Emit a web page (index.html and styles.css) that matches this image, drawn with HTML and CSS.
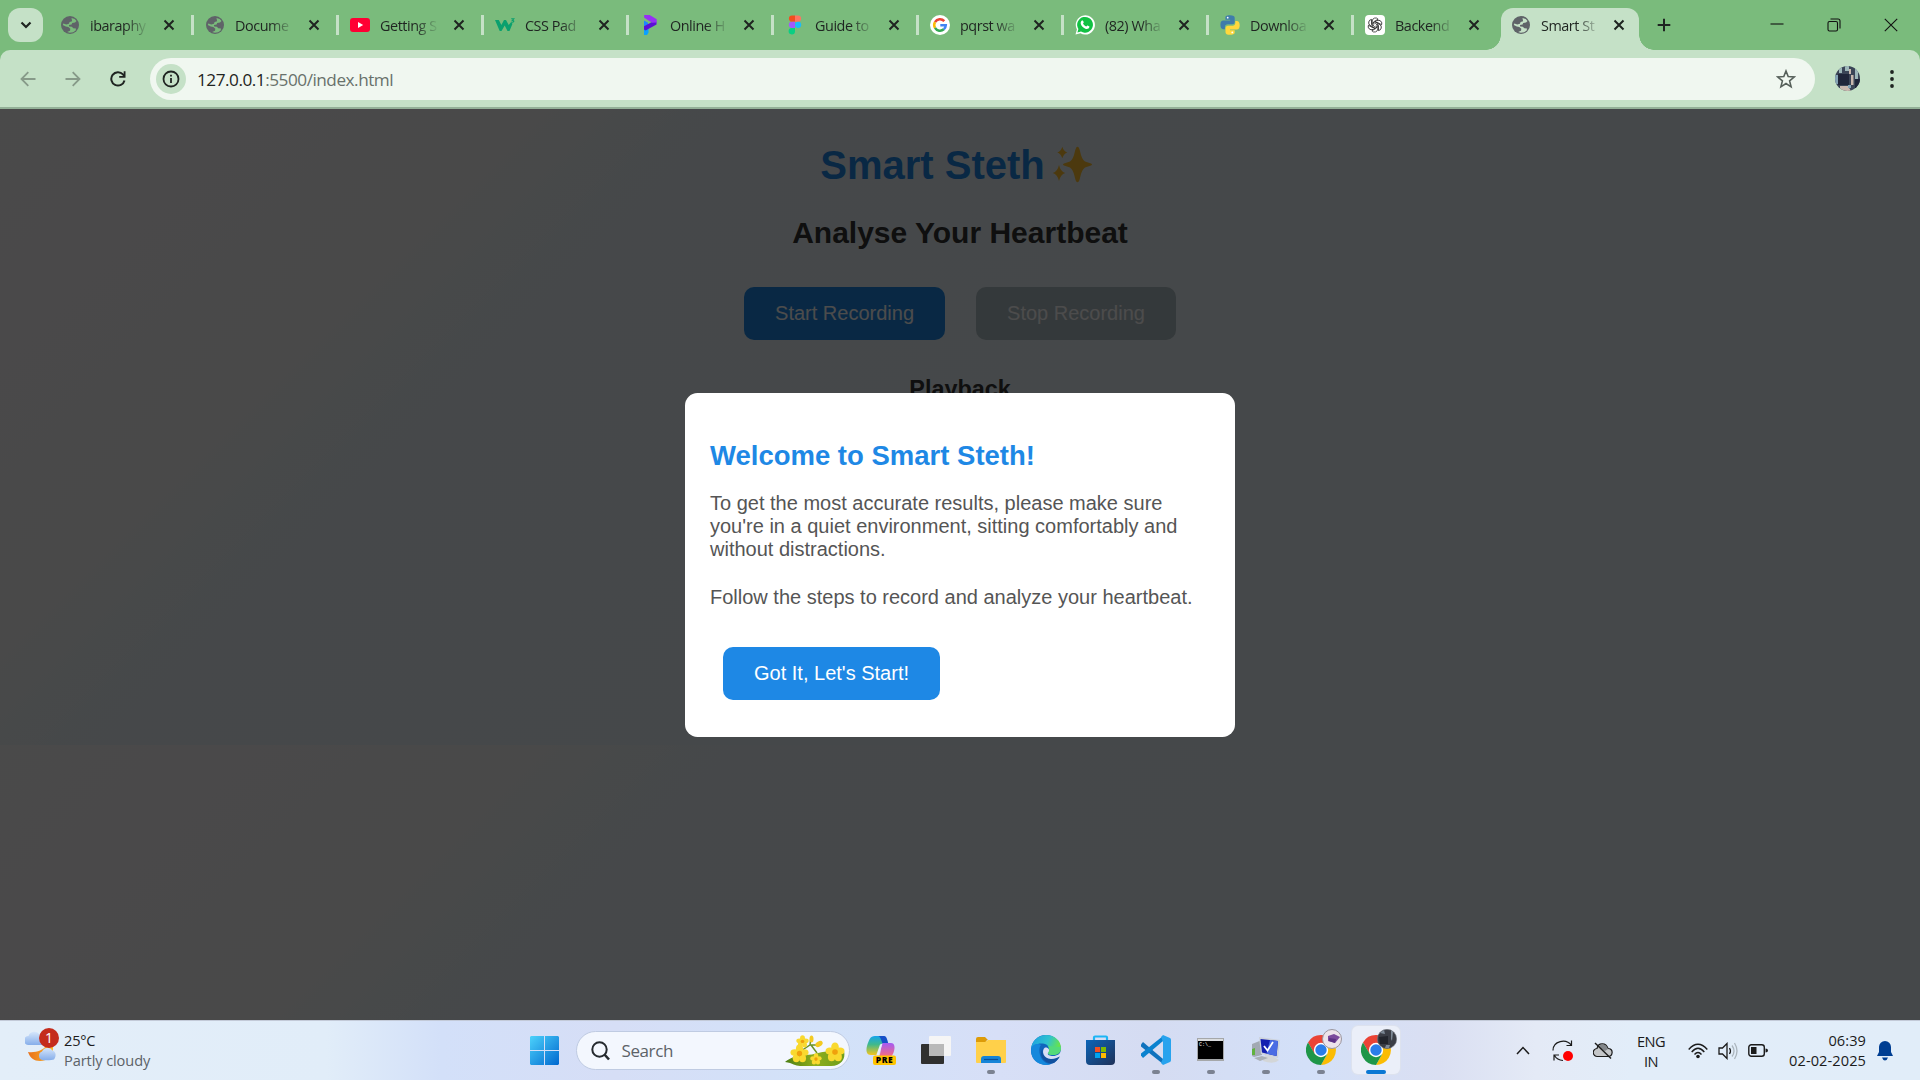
FILE: index.html
```html
<!DOCTYPE html>
<html lang="en">
<head>
<meta charset="utf-8">
<title>Smart Steth</title>
<link rel="stylesheet" href="styles.css">
</head>
<body>
<svg class="defs" aria-hidden="true">
  <symbol id="globe" viewBox="0 0 20 20"><circle cx="10" cy="10" r="9" fill="#5f6368"/><path fill="currentColor" d="M11.500 3l3.200.9 1.800 2.100-1.500 1.500-2.800.4-.6 1.600-2.700.6.300 1.400 2.600.2 1.500 1.500 2.700.2-.3 2-2.500 1.800-3.400.5-2.600-.7 2.800-1.300.3-2-2-1.700-2.500-.5-3-1.500.5-1.600 3 1 2.600-.6.700-1.800 2.500-.7z"/></symbol>
  <symbol id="x" viewBox="0 0 12 12"><path d="M1.500 1.500l9 9M10.500 1.500l-9 9" stroke="#1f2421" stroke-width="2"/></symbol>
  <symbol id="chrome" viewBox="0 0 30 30"><path d="M15 8h13.200A15 15 0 0 0 2 7.500l6.500 11.200z" fill="#ea4335"/><path d="M15 30l6.400-11.300L15 8h13.200A15 15 0 0 1 15 30z" fill="#fbbc04"/><path d="M2 7.500L8.700 18.700 15 22l6.200-3L15 30A15 15 0 0 1 2 7.500z" fill="#1e9648"/><circle cx="15" cy="15" r="7.200" fill="#fff"/><circle cx="15" cy="15" r="5.700" fill="#2b7de9"/></symbol>
  <symbol id="petals" viewBox="-10 -10 20 20"><g fill="#f9d92f"><ellipse cx="0" cy="-5" rx="3.800" ry="4.500"/><ellipse cx="5" cy="-1" rx="4.500" ry="3.500"/><ellipse cx="3.200" cy="5" rx="3.700" ry="4.200"/><ellipse cx="-3.400" cy="5" rx="3.700" ry="4.200"/><ellipse cx="-5" cy="-1" rx="4.500" ry="3.500"/></g><circle r="2.800" fill="#f0a10c"/></symbol>
</svg>

<header class="tabstrip">
  <button class="tab-search"><svg width="14" height="14" viewBox="0 0 14 14"><path d="M2.500 4.500L7 9l4.500-4.500" fill="none" stroke="#1f2421" stroke-width="2.200"/></svg></button>
  <nav class="tabs">
    <div class="tab"><svg class="fav"><use href="#globe"/></svg><span class="label">ibaraphy</span><svg class="close"><use href="#x"/></svg></div>
    <div class="tab"><svg class="fav"><use href="#globe"/></svg><span class="label">Docume</span><svg class="close"><use href="#x"/></svg></div>
    <div class="tab"><svg class="fav" viewBox="0 0 20 20"><rect y="3" width="20" height="14" rx="3" fill="#ff0033"/><path d="M8 7l5.200 3L8 13z" fill="#fff"/></svg><span class="label">Getting S</span><svg class="close"><use href="#x"/></svg></div>
    <div class="tab"><svg class="fav" viewBox="0 0 20 20"><path d="M0 5h3.800l2.600 5L9 5h2l2.700 5 2.300-2.800 1.500 1.500L14.500 16h-2L9.700 10.500 6.500 16H4.700z" fill="#0aa06e"/><path d="M16.200 3.800h2.600L17.400 5.400c2.200 0 1.700 2.400-1.200 1.700" fill="none" stroke="#0aa06e" stroke-width="1.100"/></svg><span class="label">CSS Pad</span><svg class="close"><use href="#x"/></svg></div>
    <div class="tab"><svg class="fav" viewBox="0 0 20 20"><path d="M4 13.500l4.500-2.500v6.500L7 20H4z" fill="#0aa2ff"/><path d="M4 5.500l4 2.200v3.800l-4 2.500z" fill="#2086ff"/><path d="M4 14.500v-3.200l8-4.300 4.500-.2v2.700L5.500 15.500z" fill="#5b0fd6"/><path d="M4.200 0h5.500l7 4.200v3.300l-4.500.2L4.200 2.800z" fill="#9630f5"/></svg><span class="label">Online H</span><svg class="close"><use href="#x"/></svg></div>
    <div class="tab"><svg class="fav" viewBox="0 0 20 20"><path d="M10 .5H7A3.100 3.100 0 0 0 7 6.700h3z" fill="#f24e1e"/><path d="M10 .5h3a3.100 3.100 0 0 1 0 6.200h-3z" fill="#ff7262"/><path d="M10 6.700H7a3.100 3.100 0 0 0 0 6.300h3z" fill="#a259ff"/><circle cx="13.100" cy="9.800" r="3.100" fill="#1abcfe"/><path d="M10 13H7a3.200 3.200 0 1 0 3 3.200z" fill="#0acf83"/></svg><span class="label">Guide to</span><svg class="close"><use href="#x"/></svg></div>
    <div class="tab"><svg class="fav" viewBox="0 0 20 20"><circle cx="10" cy="10" r="10" fill="#fff"/><g fill="none" stroke-width="2.500"><path d="M14.300 6.200A5.800 5.800 0 0 0 5 7.100" stroke="#ea4335"/><path d="M5 7.100a5.800 5.800 0 0 0 0 5.800" stroke="#fbbc05"/><path d="M5 12.900a5.800 5.800 0 0 0 8.800 1.400" stroke="#34a853"/><path d="M13.800 14.300A5.800 5.800 0 0 0 15.800 10.200H10.300" stroke="#4285f4"/></g></svg><span class="label">pqrst wa</span><svg class="close"><use href="#x"/></svg></div>
    <div class="tab"><svg class="fav" viewBox="0 0 20 20"><path d="M.5 19.500l1.400-5A9.600 9.600 0 1 1 5.500 18.200z" fill="#fff"/><path d="M2.400 17.600l1-3.500A7.900 7.900 0 1 1 6 16.600z" fill="#12c143"/><path d="M7 5.600c.8-.4 1.200-.1 1.700 1.700.1.500-.5.900-.7 1.300.8 1.500 1.700 2.300 3.300 3 .4-.3.800-1.100 1.200-1 1.600.7 2 .9 1.900 1.400-.3 1.800-2.300 2.300-4 1.700C8 12.800 6.500 11 5.800 9 5.400 7.600 6 6.200 7 5.600z" fill="#fff"/></svg><span class="label">(82) Wha</span><svg class="close"><use href="#x"/></svg></div>
    <div class="tab"><svg class="fav" viewBox="0 0 20 20"><path d="M10 .3c-4 0-4.600 1-4.600 2.500v2h4.800v.8H3.300C1.500 5.600.4 7 .4 9.800s1 4.400 2.700 4.400h1.800v-2.300c0-1.500 1.200-2.600 2.800-2.600h4.600c1.400 0 2.400-1 2.400-2.300V2.800C14.700 1.200 13.400.3 10 .3z" fill="#3f7cab"/><path d="M10.200 19.800c3.700 0 4.500-1 4.500-2.500v-2H10v-.8h6.800c1.800 0 2.900-1.500 2.900-4.300s-1.200-4.300-2.800-4.300h-1.600v2.200c0 1.600-1.100 2.700-2.600 2.700H8c-1.400 0-2.500 1-2.500 2.400v4c0 1.600 1.400 2.600 4.700 2.600z" fill="#ffd83c"/><circle cx="7.700" cy="2.700" r=".9" fill="#fff"/><circle cx="12.300" cy="17.400" r=".9" fill="#fff"/></svg><span class="label">Downloa</span><svg class="close"><use href="#x"/></svg></div>
    <div class="tab last"><svg class="fav" viewBox="0 0 20 20"><rect width="20" height="20" rx="4" fill="#fff"/><g fill="none" stroke="#2a2a2a" stroke-width=".8"><path id="knot" d="M7.200 11.600V6A3.300 3.300 0 0 1 13.100 4.200L8.700 6.800V9.600"/><use href="#knot" transform="rotate(60 10 10)"/><use href="#knot" transform="rotate(120 10 10)"/><use href="#knot" transform="rotate(180 10 10)"/><use href="#knot" transform="rotate(240 10 10)"/><use href="#knot" transform="rotate(300 10 10)"/></g></svg><span class="label">Backend</span><svg class="close"><use href="#x"/></svg></div>
    <div class="tab active"><svg class="fav"><use href="#globe"/></svg><span class="label">Smart St</span><svg class="close"><use href="#x"/></svg></div>
  </nav>
  <svg class="new-tab" width="14" height="14" viewBox="0 0 14 14"><path d="M7 .7v12.600M.7 7h12.600" stroke="#1f2421" stroke-width="2"/></svg>
  <div class="window-controls">
    <svg width="14" height="14" viewBox="0 0 14 14"><path d="M.5 6h13" stroke="#111" stroke-width="1.100"/></svg>
    <svg width="14" height="14" viewBox="0 0 14 14"><g fill="none" stroke="#111" stroke-width="1.100"><rect x="1" y="3.500" width="9.500" height="9.500" rx="1.500"/><path d="M3.500 1h7.500a2 2 0 0 1 2 2v7.500"/></g></svg>
    <svg width="14" height="14" viewBox="0 0 14 14"><path d="M.8.8l12.400 12.400M13.200.8L.8 13.200" stroke="#111" stroke-width="1.100"/></svg>
  </div>
</header>

<div class="toolbar-back">
<div class="toolbar">
  <div class="nav-buttons">
    <svg width="16" height="16" viewBox="0 0 16 16"><path d="M15.500 8H2M8.300 1.200L1.500 8l6.800 6.800" fill="none" stroke="#879a89" stroke-width="1.800"/></svg>
    <svg width="16" height="16" viewBox="0 0 16 16"><path d="M.5 8H14M7.700 1.200L14.500 8l-6.800 6.800" fill="none" stroke="#879a89" stroke-width="1.800"/></svg>
    <svg width="16" height="16" viewBox="0 0 16 16"><path d="M14.500 9.500A6.700 6.700 0 1 1 13 3.400l1.300 1.600" fill="none" stroke="#1f2421" stroke-width="2"/><path d="M15.500.3v6.400H9.200V5h4.500V.3z" fill="#1f2421"/></svg>
  </div>
  <div class="omnibox">
    <span class="site-info"><svg width="18" height="18" viewBox="0 0 18 18"><circle cx="9" cy="9" r="7.500" fill="none" stroke="#1f2421" stroke-width="1.800"/><path d="M8.100 4.800h1.800v1.800H8.100zM8.100 8h1.800v5H8.100z" fill="#1f2421"/></svg></span>
    <span class="url">127.0.0.1<span class="path">:5500/index.html</span></span>
    <svg class="star" width="20" height="20" viewBox="0 0 20 20"><path d="M10 2l2.200 5.600 6 .4-4.600 3.900 1.500 5.900L10 14.500l-5.100 3.300 1.500-5.900L1.800 8l6-.4z" fill="none" stroke="#56605a" stroke-width="1.600"/></svg>
  </div>
  <svg class="avatar" width="25" height="25" viewBox="0 0 25 25"><clipPath id="av"><circle cx="12.500" cy="12.500" r="12.500"/></clipPath><g clip-path="url(#av)"><path fill="#3b4557" d="M0 0h25v25H0z"/><path fill="#9eb7ba" d="M4 0h3v7H4zM10 0h4v5h-4zM20 3h3v10h-3z"/><path fill="#20263a" d="M3 8h11v11H3zM20 13h5v9h-5z"/><path fill="#c9b8ae" d="M16 9h2.500v10H16zM5 20h8l3 5H5zM14 3h2v5h-2z"/><path fill="#85a4b5" d="M0 9h3v9H0zM13 19h3v3h-3z"/></g></svg>
  <svg class="menu" width="6" height="20" viewBox="0 0 6 20"><g fill="#1f2421"><circle cx="3" cy="3" r="1.900"/><circle cx="3" cy="10" r="1.900"/><circle cx="3" cy="17" r="1.900"/></g></svg>
</div>
</div>

<main class="page">
  <h1>Smart Steth<svg class="sparkles" width="55" height="46" viewBox="0 0 55 46"><g fill="#fdc030"><path d="M32.500 4.700q1.500 0 2.500 4.300q1.700 8.500 5 10.500l6 2q2 1 0 2l-6 2q-3.300 2-5 10.500q-1 4.300-2.500 4.300t-2.500-4.300q-1.700-8.500-5-10.500l-6-2q-2-1 0-2l6-2q3.300-2 5-10.500q1-4.300 2.500-4.300z"/><path d="M17.300 4.700q1.500 4.800 5 5.800-3.500 1-5 5.800-1.500-4.800-5-5.800 3.500-1 5-5.800z"/><path d="M14 23q1.500 6.500 6.200 8-4.700 1.500-6.200 8-1.500-6.500-6.200-8 4.700-1.500 6.200-8z"/></g></svg></h1>
  <h2>Analyse Your Heartbeat</h2>
  <div class="actions"><button class="btn">Start Recording</button><button class="btn disabled">Stop Recording</button></div>
  <h3>Playback</h3>
  <div class="overlay">
    <section class="modal">
      <h2>Welcome to Smart Steth!</h2>
      <p>To get the most accurate results, please make sure you're in a quiet environment, sitting comfortably and without distractions.</p>
      <p>Follow the steps to record and analyze your heartbeat.</p>
      <button class="btn">Got It, Let's Start!</button>
    </section>
  </div>
</main>

<footer class="taskbar">
  <div class="weather">
    <svg width="36" height="36" viewBox="0 0 36 36"><defs><linearGradient id="cl" x2="0" y2="1"><stop stop-color="#d5e6fb"/><stop offset="1" stop-color="#86aeea"/></linearGradient><linearGradient id="mo" x2="1"><stop stop-color="#e8701a"/><stop offset="1" stop-color="#fdb92c"/></linearGradient></defs><path d="M3.500 18a4.500 4.500 0 0 1 0-9 6 6 0 0 1 11-1l3 10z" fill="url(#cl)"/><path d="M28 19c1 9-5 15-13 15-6 0-10-3-12-9 8 1 15-2 18-6z" fill="url(#mo)"/><path d="M17 33a4.500 4.500 0 0 1 0-8.500 6 6 0 0 1 10.500-1c3 .8 4.500 5 1.500 9-2 .8-8 .8-12 .5z" fill="url(#cl)"/></svg>
    <span class="badge">1</span>
    <div class="weather-text"><span class="temp">25°C</span><span class="muted">Partly cloudy</span></div>
  </div>

  <div class="apps">
    <div class="cell"><svg width="29" height="29" viewBox="0 0 29 29"><defs><linearGradient id="wn" x2="1" y2="1"><stop stop-color="#4cd2fb"/><stop offset="1" stop-color="#0068cf"/></linearGradient></defs><path d="M1 0h13v14H0V1zM15 0h13l1 1v13H15zM0 15h14v14H1l-1-1zM15 15h14v13l-1 1H15z" fill="url(#wn)"/></svg></div>
    <div class="search">
      <svg width="20" height="20" viewBox="0 0 20 20"><circle cx="8.500" cy="8.500" r="7.200" fill="none" stroke="#24292e" stroke-width="2"/><path d="M13.500 13.500l4.500 5" stroke="#24292e" stroke-width="2.600"/></svg>
      <span>Search</span>
      <svg class="flowers" width="62" height="32" viewBox="0 0 62 32"><defs><linearGradient id="lf" x2="1"><stop stop-color="#4c7e14"/><stop offset=".5" stop-color="#8fae1c"/><stop offset="1" stop-color="#6d9d1d"/></linearGradient></defs><path d="M1 27c5-4 12-7 20-7 10 0 16-4 27-4l12 0c2 8-3 15-13 15H16c-5 0-7-3-15-4z" fill="url(#lf)"/><path d="M14 18l12-8 10 0M26 10l1-8M27 10l6 8" fill="none" stroke="#6b9228" stroke-width="1.500"/><use href="#petals" x="6" y="9" width="19" height="19"/><use href="#petals" x="12" y="0" width="13" height="13"/><use href="#petals" x="41" y="7" width="20" height="20"/><use href="#petals" x="26" y="18" width="12" height="12"/><g fill="#f3ca22"><ellipse cx="27.500" cy="4" rx="2" ry="3.500"/><ellipse cx="35" cy="9" rx="4" ry="2.500" transform="rotate(-30 35 9)"/></g></svg>
    </div>
    <div class="cell"><svg width="32" height="32" viewBox="0 0 32 32"><defs><linearGradient id="c1" x2="0" y2="1"><stop stop-color="#15a5ec"/><stop offset=".45" stop-color="#41b98b"/><stop offset="1" stop-color="#f6c51b"/></linearGradient><linearGradient id="c2" x2="0" y2="1"><stop stop-color="#a45bf4"/><stop offset="1" stop-color="#ff6f75"/></linearGradient></defs><path d="M10 2h8c4 0 4 7 5 8h-6l-5 11H6c-5 0-5-5-4-9C4 6 5 2 10 2z" fill="url(#c1)"/><path d="M13 2h6c3 0 3.500 5 4.500 8H18c-1 0-2-8-5-8z" fill="#174fc8"/><path d="M18 9h8c4 0 4 5 3 8-1 4-3 7-7 7h-9c3-1 3-15 5-15z" fill="url(#c2)"/><path d="M17.500 9.500l-4 12-2.500.5 4-11.500z" fill="#e8eefc"/><rect x="8" y="21.500" width="23" height="9.500" rx="2" fill="#ffc400"/><text class="pre" x="19.500" y="29.300" text-anchor="middle">PRE</text></svg></div>
    <div class="cell"><svg width="32" height="32" viewBox="0 0 32 32"><rect x="1" y="10" width="23" height="20" rx="1" fill="#30302f"/><rect x="9" y="2" width="22" height="20" rx="1" fill="#f5f5f5"/><path d="M9 10h15v12H9z" fill="#b9b9b9"/></svg></div>
    <div class="cell run"><svg width="30" height="30" viewBox="0 0 30 30"><path d="M0 4q0-2 2-2h7l3 3h-1l-2 3H0z" fill="#dd9b08"/><path d="M0 7h9l3-2h18v22q0 1-1 1H1q-1 0-1-1z" fill="#ffd04a"/><path d="M5 28v-4q0-3 3-3h14q3 0 3 3v4z" fill="#1684d8"/><path d="M8 24.500h14" stroke="#0b4f98" stroke-width="1.200"/></svg></div>
    <div class="cell"><svg width="30" height="30" viewBox="0 0 30 30"><defs><linearGradient id="e1" x2="1" y2=".3"><stop stop-color="#1b9de2"/><stop offset=".6" stop-color="#2fc2cf"/><stop offset="1" stop-color="#67e34d"/></linearGradient></defs><circle cx="15" cy="15" r="15" fill="#1065bd"/><path d="M0 14C1 5 8 0 15 0c9 0 15 6 15 13 0 5-4 7-8 7-3 0-5-1-5-2 3-3 1-9-5-9.500C6 8 1 11 0 14z" fill="url(#e1)"/><path d="M10 10C6 14 9 29 20 29 13 32 0 28 0 15.500 0 9 7 8 10 10z" fill="#1588dc"/><path d="M12 13c-2 4 1 11 8 11 4 0 7-2 9-3-1 2-3 5-6 7-8 2-17-7-11-15z" fill="#12519f"/><path d="M30 14c0 5-4 7-8 7-3 0-6-1-5-3 3-3 0-6-3-5.500-4 3-2 11 6 11.500 4 0 7-2 10-3z" fill="#d8def6"/><path d="M17 18c2-2 1-5 0-7l13 1c0 6-4 8-8 8-3 0-5-1-5-2z" fill="#53da7a"/></svg></div>
    <div class="cell"><svg width="30" height="30" viewBox="0 0 30 30"><path d="M8 7V2.500Q8 1.500 9 1.500h11q1 0 1 1V7" fill="none" stroke="#1db5f5" stroke-width="2.200"/><defs><linearGradient id="st" x2="1" y2="1"><stop stop-color="#0c65b8"/><stop offset="1" stop-color="#1f3158"/></linearGradient></defs><path d="M0 5h29v21q0 4-4 4H4q-4 0-4-4z" fill="url(#st)"/><path d="M9 12h5v5H9z" fill="#f25022"/><path d="M15 12h5v5h-5z" fill="#7fba00"/><path d="M9 18h5v5H9z" fill="#00a4ef"/><path d="M15 18h5v5h-5z" fill="#ffb900"/></svg></div>
    <div class="cell run"><svg width="30" height="30" viewBox="0 0 30 30"><path d="M2 7l20 17v5L0 11.500q-.5-1 0-2z" fill="#0f72bd"/><path d="M2 23L22 6V1L0 18.500q-.5 1 0 2z" fill="#0a82cf"/><path d="M22 0l7 3q1 .5 1 2v20q0 1.500-1 2l-7 3-2-2 2-5V7l-2-5z" fill="#27a3ee"/></svg></div>
    <div class="cell run"><svg width="30" height="30" viewBox="0 0 30 30"><rect x="1" y="3" width="27" height="23" fill="#a5a7a9"/><path d="M2 6h25v18H2z" fill="#000"/><path d="M2 4h25v2H2z" fill="#dadcde"/><text class="prompt" x="3" y="11">C:\_</text></svg></div>
    <div class="cell run"><svg width="30" height="30" viewBox="0 0 30 30"><path d="M1 9l10-4v15l-8 2-2-1z" fill="#a2a9b3"/><path d="M1 14l3-1v7H1z" fill="#60b23f"/><path d="M8 2l21 3-2 18-17-4z" fill="#ccd2dc"/><path d="M9.500 4L27 6l-1.500 15L11 17.500z" fill="#1420b0"/><path d="M19 5l8 1-1.500 15-10-2.500z" fill="#4a6ce4"/><path d="M13 11l3.500 4.500L22 7" stroke="#fff" stroke-width="1.800" fill="none"/><path d="M14 20l9 2 5 3q-5 5-16 1z" fill="#d3d6d8"/><path d="M3 23l8-2 6 2-8 3z" fill="#aab0b6"/></svg></div>
    <div class="cell run"><svg width="30" height="30"><use href="#chrome"/></svg><svg class="profile" width="20" height="20" viewBox="0 0 20 20"><circle cx="10" cy="10" r="9.500" fill="#ece3ea" stroke="#9a959d"/><path d="M6 7l6-2 6 3-5 6-7-2z" fill="#7b4a9c"/><path d="M7 9l7 1-1 4-6-2z" fill="#5b3184"/></svg></div>
    <div class="cell current"><svg width="30" height="30"><use href="#chrome"/></svg><svg class="profile" width="20" height="20" viewBox="0 0 20 20"><circle cx="10" cy="10" r="9.700" fill="#3a3d45" stroke="#777b83" stroke-width=".6"/><path d="M3 4l4-3 1 4zM14 1l2 2-1 9-1-2zM9 16h4l-1 3H8z" fill="#7d8996"/><path d="M2 8l9-1v8H3z" fill="#22252c"/></svg></div>
  </div>

  <div class="tray">
    <svg class="caret" width="14" height="10" viewBox="0 0 14 10"><path d="M1 8l6-6.500L13 8" fill="none" stroke="#1b1b1b" stroke-width="1.500"/></svg>
    <svg class="sync" width="22" height="22" viewBox="0 0 22 22"><g fill="none" stroke="#1b1b1b" stroke-width="1.200"><path d="M1 10.500C1 1 14-2 19.500 5.500M14.500 5.500h5V.5"/><path d="M2 20.500V15h5M2.500 15.500Q5 20 11 20.500"/></g><circle cx="16" cy="16" r="5" fill="#f00"/></svg>
    <svg class="cloud" width="20" height="18" viewBox="0 0 20 18"><path d="M4.500 14.500a4 4 0 0 1-.5-8C5 .5 13 0 15 6.500c6 0 5 8 0 8z" fill="#c4c6c8" stroke="#1b1b1b" stroke-width="1.200"/><path d="M5 5C7 1 13 1 15 7l-3 2z" fill="#83878b"/><path d="M2 1l16 15.500" stroke="#1b1b1b" stroke-width="1.400"/></svg>
    <div class="lang"><span>ENG</span><span>IN</span></div>
    <svg class="wifi" width="20" height="16" viewBox="0 0 20 16"><g fill="none" stroke="#1b1b1b" stroke-width="1.400"><path d="M.7 6.500Q10-4 19.300 6.500M3.700 9Q10 1.500 16.300 9M6.500 11.500Q10 7.500 13.500 11.500"/></g><circle cx="10" cy="13.500" r="1.800" fill="#1b1b1b"/></svg>
    <svg class="volume" width="20" height="18" viewBox="0 0 20 18"><g fill="none" stroke-width="1.300"><path d="M1 6h3.500L9 1.500v15L4.500 12H1z" stroke="#1b1b1b"/><path d="M11.500 6q2 3 0 6" stroke="#1b1b1b"/><path d="M14 3.500q4 5.500 0 11M16.500 1q5 8 0 16" stroke="#abb5bd"/></g></svg>
    <svg class="battery" width="20" height="13" viewBox="0 0 20 13"><rect x=".8" y=".8" width="15.500" height="11.400" rx="2.500" fill="none" stroke="#1b1b1b" stroke-width="1.400"/><path d="M3 3h5.500v7H3zM17.500 4.500q2.500 0 2.500 2t-2.500 2z" fill="#1b1b1b"/></svg>
    <div class="clock"><span>06:39</span><span>02-02-2025</span></div>
    <svg class="bell" width="16" height="20" viewBox="0 0 16 20"><path d="M8 0a6 6 0 0 1 6 6v5l2 4H0l2-4V6a6 6 0 0 1 6-6zM5 16.500h6q-1 3-3 3t-3-3z" fill="#003e92"/></svg>
  </div>
</footer>
</body>
</html>
```

FILE: styles.css
```css
* { box-sizing: border-box; }
body { margin: 0; width: 1920px; height: 1080px; overflow: hidden; display: flex; flex-direction: column; font-family: "Open Sans", "Noto Sans", sans-serif; color: #1f2421; }
svg { display: block; flex: none; }
button { border: 0; font: inherit; }
.defs { position: absolute; width: 0; height: 0; }

/* Tab strip */
.tabstrip { flex: none; height: 50px; background: #7abb7c; display: flex; padding-left: 8px; }
.tab-search { width: 35px; height: 34px; margin: 8px 6px 0 0; padding: 0; border-radius: 12px; background: #c5e1c7; display: grid; place-items: center; }
.tabs { display: flex; }
.tab { width: 145px; height: 50px; padding-left: 11px; display: flex; align-items: center; background: linear-gradient(#c5e1c7, #c5e1c7) 142px 15px / 3px 20px no-repeat; }
.tab.last { background: none; }
.fav { width: 20px; height: 20px; color: #7abb7c; }
.label { width: 59px; margin: 1px 14px 0 10px; white-space: nowrap; font-size: 14.400px; letter-spacing: -0.450px; line-height: 20px; -webkit-mask-image: linear-gradient(90deg, #000 60%, transparent 100%); mask-image: linear-gradient(90deg, #000 60%, transparent 100%); }
.close { width: 12px; height: 12px; }
.tab.active { width: 138px; height: 42.500px; margin: 7.500px 0 0 2px; padding: 0 0 7.500px 10px; border-radius: 12px 12px 0 0; background: #c5e1c7; position: relative; }
.tab.active .fav { color: #c5e1c7; }
.tab.active .label { margin-right: 13px; }
.tab.active::before, .tab.active::after { content: ""; position: absolute; bottom: 0; width: 15px; height: 15px; }
.tab.active::before { right: 100%; background: radial-gradient(circle at 0 0, transparent 14.500px, #c5e1c7 15px); }
.tab.active::after { left: 100%; background: radial-gradient(circle at 100% 0, transparent 14.500px, #c5e1c7 15px); }
.new-tab { margin: 18px 0 0 18px; }
.window-controls { margin: 18px 22px 0 auto; display: flex; gap: 43px; }

/* Toolbar */
.toolbar-back { flex: none; background: #7abb7c; }
.toolbar { height: 59px; background: #c5e1c7; border-bottom: 2px solid #93b097; border-radius: 10px 10px 0 0; display: flex; align-items: center; padding: 0 25px 0 20px; }
.nav-buttons { display: flex; gap: 29px; width: 130px; }
.omnibox { width: 1665px; height: 42px; margin-top: 1px; border-radius: 21px; background: #f0f7f0; display: flex; align-items: center; padding: 0 19px 0 6px; }
.site-info { width: 30px; height: 30px; border-radius: 50%; background: #c5e1c7; display: grid; place-items: center; }
.url { margin-left: 11px; font-size: 17.200px; letter-spacing: -0.480px; }
.path { color: #68716b; }
.star { margin-left: auto; }
.avatar { margin-left: 20px; }
.menu { margin-left: auto; }

/* Page */
.page { flex: none; height: 911px; position: relative; padding-top: 33px; text-align: center; font-family: Arial, "Liberation Sans", sans-serif; color: #333; background: linear-gradient(135deg, #f9f7f8, #f5f4f6 20%, #e9f2f7 29%, #e6f2f8) 0 0 / 100% 636px; }
.page h1 { display: flex; justify-content: center; margin: 0 0 27px; font-size: 40px; line-height: 46px; color: #1e88e5; }
.page h2 { margin: 0; font-size: 30px; line-height: 35px; }
.page h3 { margin: 36px 0 0; font-size: 23.400px; line-height: 27px; }
.actions { display: flex; justify-content: center; gap: 31px; margin-top: 37px; }
.btn { height: 53px; padding: 0 31px; border-radius: 10px; background: #1e88e5; color: #fff; font-size: 20px; }
.btn.disabled { background: #b0bec5; }
.overlay { position: absolute; inset: 0; background: rgba(0, 0, 0, .7); display: grid; place-items: center; }
.modal { width: 550px; height: 344px; padding: 47px 25px 0; border-radius: 12.500px; background: #fff; text-align: left; }
.modal h2 { font-size: 27.500px; line-height: 32px; color: #1e88e5; margin-bottom: 20px; }
.modal p { margin: 0 0 25px; font-size: 20px; line-height: 23px; color: #555; }
.modal .btn { margin: 13px 0 0 13px; }

/* Taskbar */
.taskbar { height: 60px; border-top: 1px solid #c3cad8; background: linear-gradient(90deg, #e3eef9 0, #e1edf9 17%, #d3e0f9 23%, #d6def6 32%, #d2e2f9 43%, #d7dff7 52%, #d5dcf2 60%, #d3e0f8 68%, #dadff2 75%, #e4eaf6 80%, #e2edf9 85%, #e1edf9); display: grid; grid-template-columns: 1fr auto 1fr; font-size: 14.600px; line-height: 20px; color: #1b1b1b; }
.weather { position: relative; display: flex; padding: 6px 0 0 25px; }
.badge { position: absolute; left: 39px; top: 7px; width: 20px; height: 20px; border-radius: 50%; background: #c42b1c; color: #fff; text-align: center; font-size: 14px; }
.weather-text { display: flex; flex-direction: column; margin: 3px 0 0 3px; letter-spacing: -0.100px; }
.temp { letter-spacing: -0.200px; }
.muted { color: #5c6268; }
.apps { display: flex; gap: 7px; padding-top: 5px; }
.cell { width: 48px; height: 48px; display: grid; place-items: center; position: relative; border-radius: 6px; }
.run::after, .current::after { content: ""; position: absolute; bottom: 0; left: 20px; width: 8px; height: 4px; border-radius: 2px; background: #7b8291; }
.current { background: #ebeff9; box-shadow: 0 0 0 1px #dde2ee; }
.current::after { left: 14px; width: 20px; background: #0a78d4; }
.profile { position: absolute; left: 25px; top: 3px; }
.pre { font: 800 8.500px "Open Sans", sans-serif; letter-spacing: .5px; }
.prompt { font: 5px "Liberation Mono", monospace; fill: #fff; }
.search { width: 274px; height: 39px; margin-top: 5px; border: 1px solid #bfcbe2; border-radius: 20px; background: #f3f7fe; display: flex; align-items: center; padding: 0 3px 0 14px; color: #5c6268; font-size: 17px; letter-spacing: -0.400px; }
.search span { margin-left: 11px; }
.flowers { margin-left: auto; }
.tray { display: flex; align-items: center; justify-content: flex-end; padding-right: 27px; }
.lang, .clock { display: flex; flex-direction: column; }
.sync { margin-left: 22px; }
.cloud { margin-left: 19px; }
.lang { width: 30px; margin-left: 23px; align-items: center; padding-top: 1px; letter-spacing: -0.500px; }
.wifi { margin-left: 22px; }
.volume { margin-left: 10px; }
.battery { margin-left: 10px; }
.clock { width: 80px; margin: -2px 11px 0 18px; align-items: flex-end; letter-spacing: 0.080px; }
```
